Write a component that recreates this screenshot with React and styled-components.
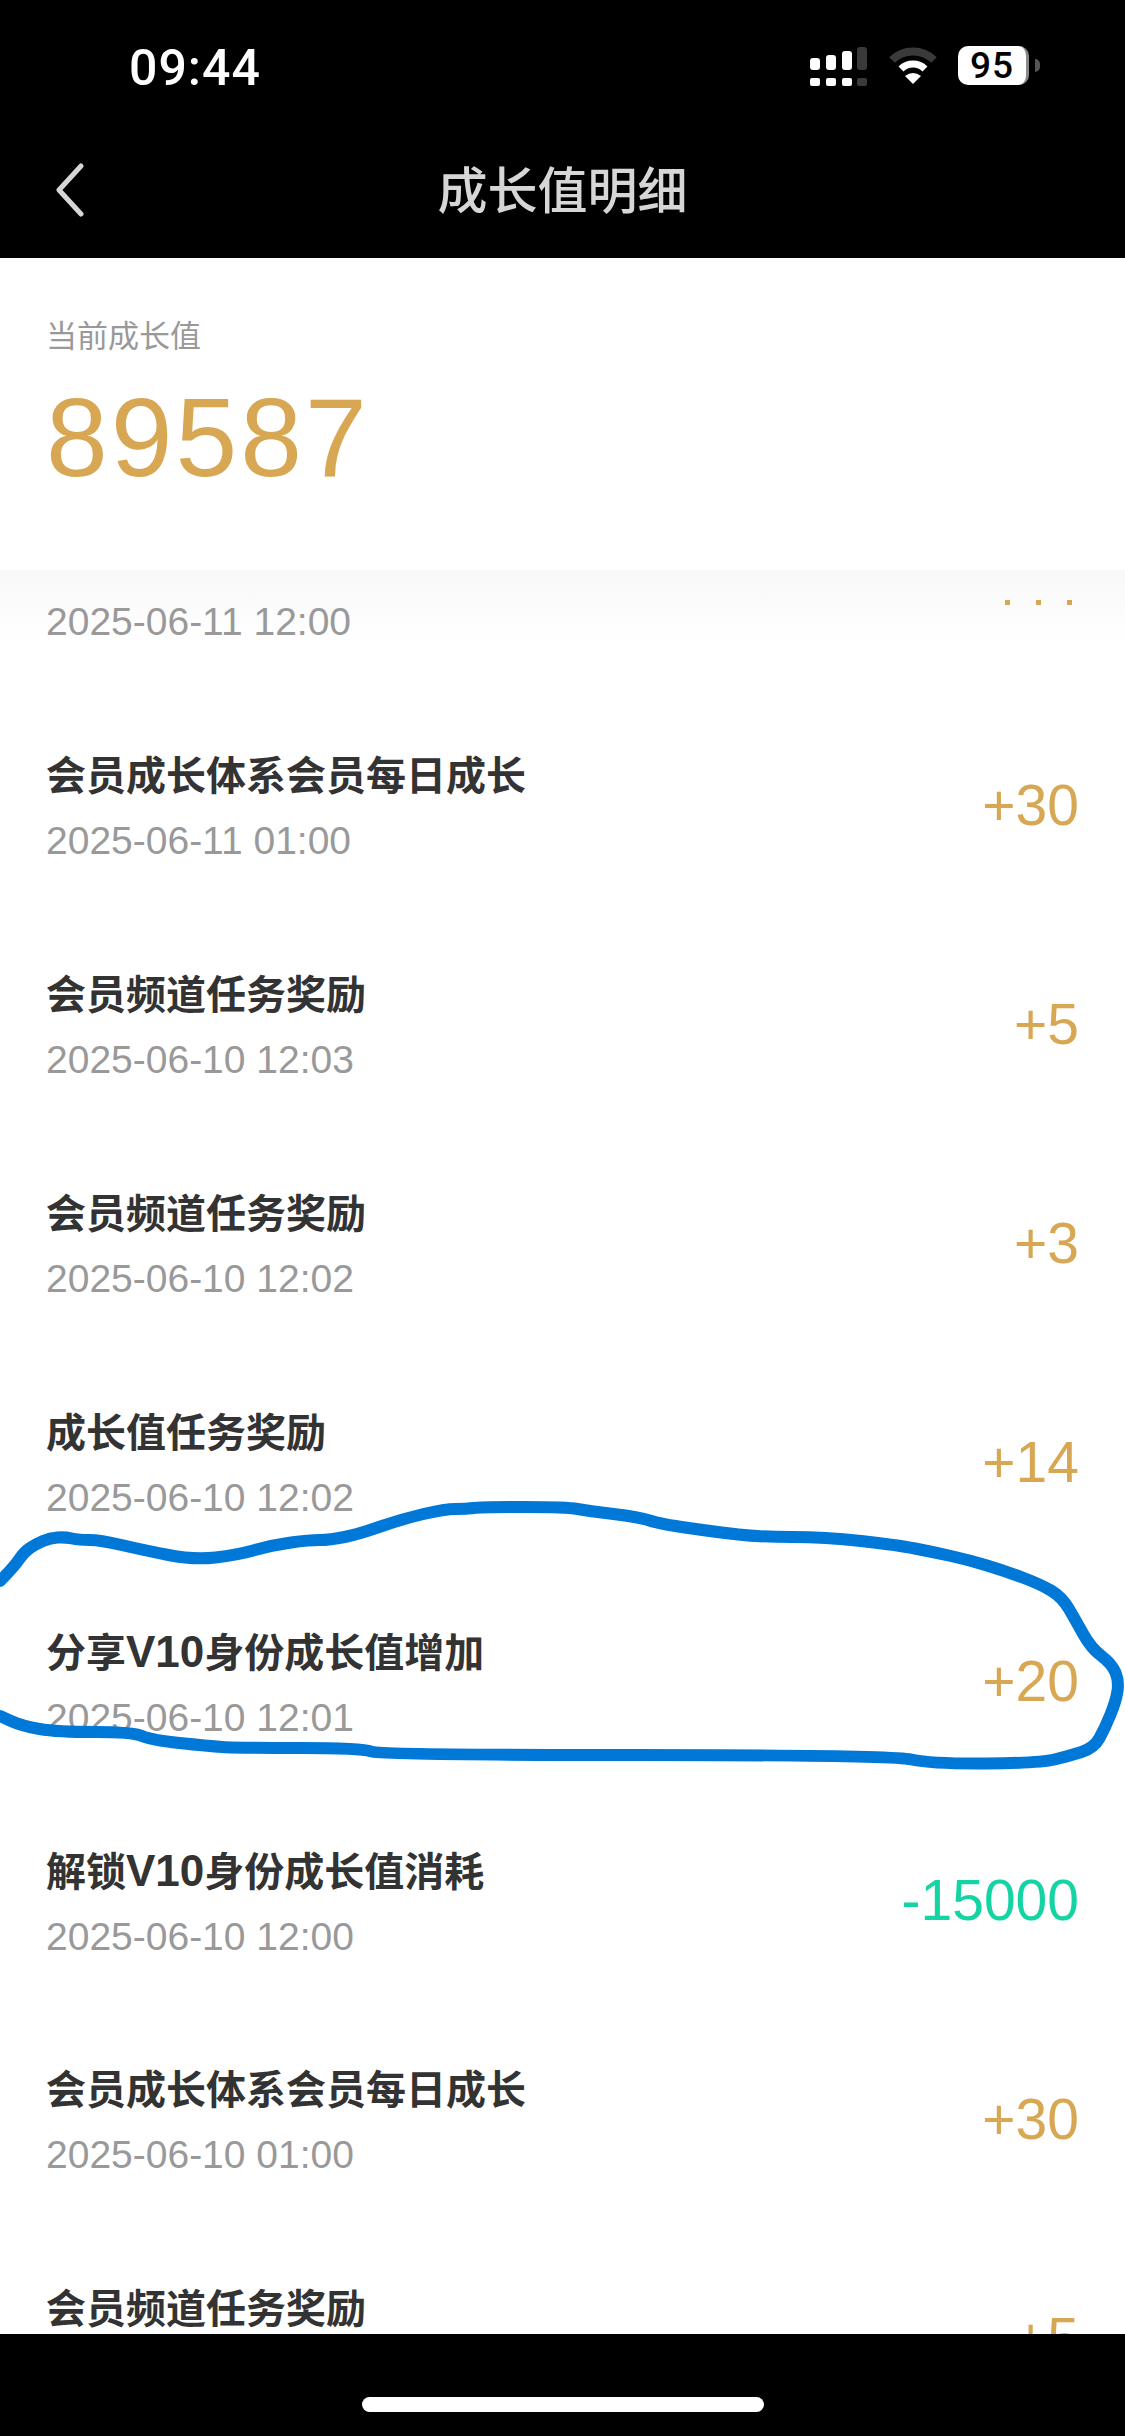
import React from 'react'
import styled, { createGlobalStyle } from 'styled-components'

const GlobalStyle = createGlobalStyle`
    html, body {
        margin: 0;
        padding: 0;
        background: #000;
    }
    * {
        box-sizing: border-box;
    }
`

const Page = styled.div`
    position: relative;
    width: 1125px;
    height: 2436px;
    overflow: hidden;
    display: flex;
    flex-direction: column;
    background: #fff;
    font-family: "Liberation Sans", "Noto Sans CJK SC", sans-serif;
`

const Header = styled.header`
    height: 258px;
    flex: none;
    background: #000;
    display: flex;
    flex-direction: column;
`

const StatusBar = styled.div`
    height: 125px;
    padding: 46px 85px 0 129px;
    display: flex;
    justify-content: space-between;
    align-items: flex-start;
`

const Clock = styled.span`
    color: #fff;
    font-family: Roboto, sans-serif;
    font-size: 50px;
    line-height: 44px;
    font-weight: 500;
    letter-spacing: 1px;
`

const StatusIcons = styled.div`
    display: flex;
    align-items: flex-start;
`

const Battery = styled.div`
    width: 71px;
    height: 39px;
    margin-left: 20px;
    border-radius: 10px;
    border-right: 3px solid #8a8a8a;
    background: #fff;
    color: #000;
    font-family: Roboto, sans-serif;
    font-size: 37px;
    line-height: 39px;
    font-weight: 500;
    text-align: center;
    letter-spacing: 1px;
`

const BatteryNub = styled.div`
    width: 5px;
    height: 13px;
    margin: 13px 0 0 6px;
    border-radius: 0 6px 6px 0;
    background: #555;
`

const NavBar = styled.div`
    position: relative;
    flex: 1;
    display: flex;
    align-items: center;
    justify-content: center;
`

const BackButton = styled.svg`
    position: absolute;
    left: 55px;
    top: 38px;
`

const NavTitle = styled.h1`
    margin: 0;
    color: #d6d6d6;
    font-size: 50px;
    line-height: 60px;
    font-weight: 500;
`

const Summary = styled.section`
    position: relative;
    z-index: 1;
    height: 312px;
    flex: none;
    padding: 59px 46px 0;
    background: #fff;
`

const SummaryLabel = styled.div`
    color: #999;
    font-size: 31px;
    line-height: 40px;
`

const SummaryValue = styled.div`
    margin-top: 15px;
    color: #d8a753;
    font-size: 111px;
    line-height: 132px;
    letter-spacing: 3px;
`

const ListArea = styled.main`
    position: relative;
    flex: 1;
    overflow: hidden;
`

const Fade = styled.div`
    position: absolute;
    left: 0;
    right: 0;
    top: 0;
    height: 72px;
    background: linear-gradient(to bottom, #f8f8f8, #fff);
`

const List = styled.div`
    position: relative;
    margin-top: -94px;
`

const Row = styled.div`
    height: 219px;
    padding: 0 46px;
    display: flex;
    align-items: center;
    justify-content: space-between;
`

const RowText = styled.div`
    display: flex;
    flex-direction: column;
    gap: 17px;
    padding-top: 8px;
`

const RowTitle = styled.div`
    min-height: 48px;
    color: #333;
    font-size: 40px;
    line-height: 48px;
    font-weight: 700;
`

const Latin = styled.span`
    font-size: 44px;
`

const RowDate = styled.div`
    color: #999;
    font-size: 39px;
    line-height: 48px;
`

const RowValue = styled.div`
    color: ${(props) => (props.$spent ? '#14d4a4' : '#d8a753')};
    font-size: 57px;
    line-height: 64px;
`

const Ticks = styled.div`
    display: flex;
    gap: 26px;
    margin: 34px 7px 0 0;
`

const Tick = styled.span`
    width: 5px;
    height: 5px;
    background: #d8a753;
`

const Footer = styled.footer`
    height: 102px;
    flex: none;
    position: relative;
    z-index: 1;
    background: #000;
    display: flex;
    justify-content: center;
    padding-top: 63px;
`

const HomeBar = styled.div`
    width: 402px;
    height: 15px;
    border-radius: 8px;
    background: #fff;
`

const Scribble = styled.svg`
    position: absolute;
    left: 0;
    top: 0;
    z-index: 2;
    pointer-events: none;
`

const rows = [
    { date: '2025-06-11 12:00', clipped: true },
    { title: '会员成长体系会员每日成长', date: '2025-06-11 01:00', value: '+30' },
    { title: '会员频道任务奖励', date: '2025-06-10 12:03', value: '+5' },
    { title: '会员频道任务奖励', date: '2025-06-10 12:02', value: '+3' },
    { title: '成长值任务奖励', date: '2025-06-10 12:02', value: '+14' },
    { title: <>分享<Latin>V10</Latin>身份成长值增加</>, date: '2025-06-10 12:01', value: '+20' },
    { title: <>解锁<Latin>V10</Latin>身份成长值消耗</>, date: '2025-06-10 12:00', value: '-15000', spent: true },
    { title: '会员成长体系会员每日成长', date: '2025-06-10 01:00', value: '+30' },
    { title: '会员频道任务奖励', date: '2025-06-10 00:12', value: '+5' }
]

const scribblePoints = [
    [0, 1581], [14, 1567], [24, 1552], [36, 1544], [50, 1538], [65, 1537], [79, 1540], [100, 1540], [143, 1550],
    [194, 1560], [237, 1555], [273, 1545], [309, 1540], [330, 1540], [359, 1534], [402, 1519], [445, 1509],
    [466, 1509], [481, 1507], [567, 1507], [588, 1511], [639, 1517], [660, 1524], [717, 1532], [760, 1537],
    [825, 1537], [897, 1545], [933, 1552], [969, 1560], [1005, 1571], [1040, 1584], [1062, 1597], [1076, 1621],
    [1091, 1648], [1112, 1664], [1119, 1681], [1116, 1701], [1105, 1728], [1094, 1748], [1069, 1756], [1040, 1763],
    [933, 1764], [890, 1755], [380, 1755], [362, 1748], [237, 1748], [208, 1746], [151, 1740], [133, 1732],
    [57, 1732], [22, 1726], [0, 1716]
]

// curve through the midpoints so the pen line has no hard corners
const scribblePath = scribblePoints.reduce((d, [x, y], i, all) => {
    if (i === 0) return `M${x} ${y}`
    if (i === all.length - 1) return `${d} L${x} ${y}`
    const [nx, ny] = all[i + 1]
    return `${d} Q${x} ${y} ${(x + nx) / 2} ${(y + ny) / 2}`
}, '')

const SignalIcon = () => (
    <svg width="58" height="40" viewBox="0 0 58 40" style={{ marginTop: 1 }}>
        <g fill="#fff">
            <rect x="0" y="31" width="10" height="8" rx="2" />
            <rect x="16" y="31" width="10" height="8" rx="2" />
            <rect x="32" y="31" width="10" height="8" rx="2" />
            <rect x="0" y="11" width="10" height="12" rx="3" />
            <rect x="16" y="8" width="10" height="15" rx="3" />
            <rect x="32" y="4" width="10" height="19" rx="3" />
        </g>
        <g fill="#3a3a3a">
            <rect x="47" y="31" width="10" height="8" rx="2" />
            <rect x="47" y="0" width="10" height="23" rx="3" />
        </g>
    </svg>
)

const WifiIcon = () => (
    <svg width="50" height="38" viewBox="0 0 50 38" style={{ marginLeft: 20, marginTop: 1 }}>
        <path d="M4 13 A30 30 0 0 1 46 13" fill="none" stroke="#3a3a3a" strokeWidth="8" />
        <path d="M13 22 A17 17 0 0 1 37 22" fill="none" stroke="#fff" strokeWidth="7" />
        <path d="M25 37 L17 29 Q25 23 33 29 Z" fill="#fff" />
    </svg>
)

const App = () => {
    return (
        <Page>
            <GlobalStyle />
            <Header>
                <StatusBar>
                    <Clock>09:44</Clock>
                    <StatusIcons>
                        <SignalIcon />
                        <WifiIcon />
                        <Battery>95</Battery>
                        <BatteryNub />
                    </StatusIcons>
                </StatusBar>
                <NavBar>
                    <BackButton width="30" height="54" viewBox="0 0 30 54">
                        <path d="M26 3 L4 27 L26 51" fill="none" stroke="#d6d6d6" strokeWidth="5" strokeLinecap="round" strokeLinejoin="round" />
                    </BackButton>
                    <NavTitle>成长值明细</NavTitle>
                </NavBar>
            </Header>
            <Summary>
                <SummaryLabel>当前成长值</SummaryLabel>
                <SummaryValue>89587</SummaryValue>
            </Summary>
            <ListArea>
                <Fade />
                <List>
                    {rows.map((row) => (
                        <Row key={row.date}>
                            <RowText>
                                <RowTitle>{row.title}</RowTitle>
                                <RowDate>{row.date}</RowDate>
                            </RowText>
                            {row.clipped ? (
                                <Ticks>
                                    <Tick />
                                    <Tick />
                                    <Tick />
                                </Ticks>
                            ) : (
                                <RowValue $spent={row.spent}>{row.value}</RowValue>
                            )}
                        </Row>
                    ))}
                </List>
            </ListArea>
            <Footer>
                <HomeBar />
            </Footer>
            <Scribble width="1125" height="2436" viewBox="0 0 1125 2436">
                <path d={scribblePath} fill="none" stroke="#0078d8" strokeWidth="12" strokeLinejoin="round" strokeLinecap="round" />
            </Scribble>
        </Page>
    )
}

export default App
